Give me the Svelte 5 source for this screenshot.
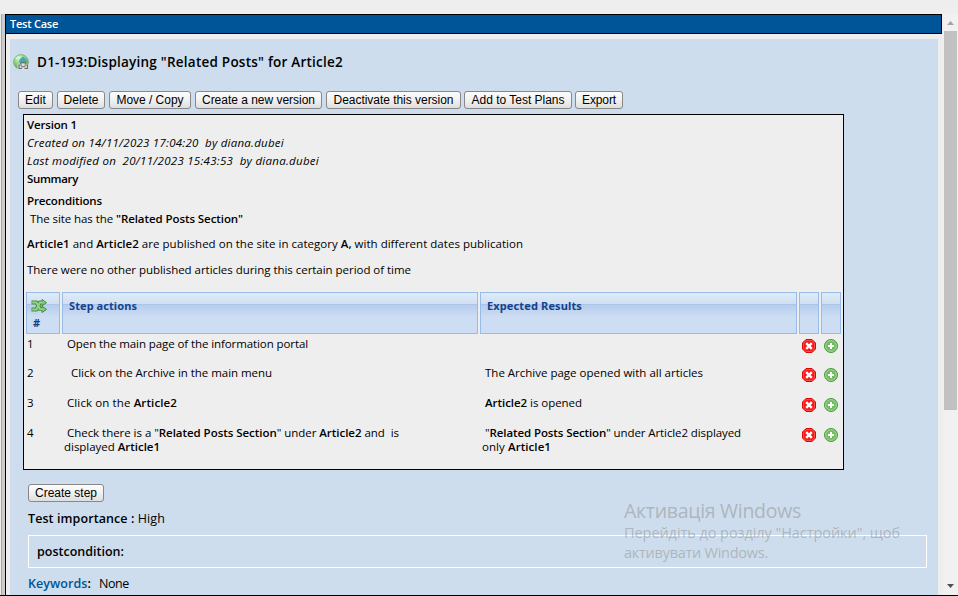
<script>
  // Spreads a line's letter spacing so that it takes the given width.
  function fit(node, width) {
    const range = document.createRange();
    range.selectNodeContents(node);
    const natural = range.getBoundingClientRect().width;
    node.style.letterSpacing = (width - natural) / node.textContent.length + 'px';
  }

  const buttons = [
    ['Edit', 35, 21],
    ['Delete', 48, 35],
    ['Move / Copy', 82, 67],
    ['Create a new version', 127, 113],
    ['Deactivate this version', 135, 120],
    ['Add to Test Plans', 108, 93],
    ['Export', 48, 34]
  ];

  // Every line is [indent, width, segments]; a segment starting with * is bold.
  const steps = [
    { h: 29, action: [[3, 241, ['Open the main page of the information portal']]], result: [] },
    {
      h: 30,
      action: [[7, 201, ['Click on the Archive in the main menu']]],
      result: [[3, 218, ['The Archive page opened with all articles']]]
    },
    {
      h: 30,
      action: [[3, 110, ['Click on the ', '*Article2']]],
      result: [[3, 97, ['*Article2', ' is opened']]]
    },
    {
      h: 42,
      action: [
        [3, 332, ['Check there is a "', '*Related Posts Section', '" under ', '*Article2', ' and \u00a0is']],
        [0, 96, ['displayed ', '*Article1']]
      ],
      result: [
        [3, 256, ['"', '*Related Posts Section', '" under Article2 displayed']],
        [0, 69, ['only ', '*Article1']]
      ]
    }
  ];
</script>

{#snippet lines(list)}
  {#each list as [indent, width, parts]}
    <div class="line" class:indent3={indent === 3} class:indent7={indent === 7}>
      <span use:fit={width}>{#each parts as p}{#if p[0] === '*'}<b>{p.slice(1)}</b>{:else}{p}{/if}{/each}</span>
    </div>
  {/each}
{/snippet}

<div class="screen">
  <div class="divider"></div>
  <main>
    <h1><span use:fit={48}>Test Case</span></h1>
    <div class="panel">
      <div class="title">
        <svg width="16" height="16" viewBox="0 0 16 16">
          <defs>
            <radialGradient id="globe" cx=".4" cy=".25" r=".8">
              <stop offset="0" stop-color="#d6f7ce" /><stop offset=".55" stop-color="#83cf78" /><stop offset="1" stop-color="#3c9150" />
            </radialGradient>
          </defs>
          <circle cx="8" cy="8" r="7.4" fill="url(#globe)" stroke="#69b567" stroke-width=".8" />
          <path d="M7 5l3-2.500 2.500 2 1.500 3-2 2-3-1-2 1-1-2z" fill="#4ba5b5" />
          <path d="M2 5l3-3 2 .5-3 3z" fill="#d9f8d1" />
          <rect x="4.500" y="9.500" width="11" height="6.500" rx="1.500" fill="#dce0dc" />
          <path d="M9 11H6v3.500h3M11.500 11H14.500v3.500h-3M8 12.800h4.500M7.500 10c0-2 5.500-2 5.500 0" fill="none" stroke="#626b66" stroke-width="1.1" />
        </svg>
        <h2><span use:fit={306}>D1-193:Displaying "Related Posts" for Article2</span></h2>
      </div>

      <div class="buttons">
        {#each buttons as [label, width, text]}
          <button style="width: {width}px"><span use:fit={text}>{label}</span></button>
        {/each}
      </div>

      <section class="case">
        <div class="row18"><b><span use:fit={50}>Version 1</span></b></div>
        <div class="row18"><i><span use:fit={257}>Created on 14/11/2023 17:04:20 &nbsp;by diana.dubei</span></i></div>
        <div class="row18"><i><span use:fit={292}>Last modified on &nbsp;20/11/2023 15:43:53 &nbsp;by diana.dubei</span></i></div>
        <div class="row18"><b><span use:fit={51}>Summary</span></b></div>
        <div class="row18 pre"><b><span use:fit={75}>Preconditions</span></b></div>
        <div class="row18 site"><span use:fit={213}>The site has the <b>"Related Posts Section"</b></span></div>
        <div class="para"><span use:fit={496}><b>Article1</b> and <b>Article2</b> are published on the site in category <b>A,</b> with different dates publication</span></div>
        <div class="para"><span use:fit={384}>There were no other published articles during this certain period of time</span></div>

        <div class="grid head">
          <div class="num">
            <svg width="16" height="14" viewBox="0 0 16 14">
              <g fill="none" stroke-linejoin="round">
                <path d="M0.500 3.500H5.500L9 10h2M0.500 10.500H5.500l3.500-7h2" stroke="#458c43" stroke-width="4" />
                <path d="M11 .5l4.500 3.200-4.500 3.200zM11 7.200l4.500 3.200-4.500 3.100z" fill="#82c774" stroke="#458c43" />
                <path d="M1.200 3.500H5.500L9 10.300h3M1.200 10.500H5.500l3.500-7h3" stroke="#93d384" stroke-width="2" />
              </g>
            </svg>
            <span>#</span>
          </div>
          <div><span use:fit={68}>Step actions</span></div>
          <div><span use:fit={95}>Expected Results</span></div>
          <div></div>
          <div></div>
        </div>
        {#each steps as s, i}
          <div class="grid step" style="height: {s.h}px">
            <div class="no">{i + 1}</div>
            <div>{@render lines(s.action)}</div>
            <div>{@render lines(s.result)}</div>
            <svg width="14" height="14" viewBox="0 0 14 14">
              <path d="M4 .5h6L13.500 4v6L10 13.500H4L.5 10V4z" fill="#f21b1b" stroke="#df0505" />
              <path d="M4.300 1.500h5.400l2.800 2.800v5.400l-2.800 2.800H4.300L1.500 9.700V4.300z" fill="none" stroke="#ff6257" stroke-width=".7" />
              <path d="M4.200 4.200l5.600 5.600M9.800 4.200L4.200 9.800" stroke="#fff" stroke-width="2.400" />
            </svg>
            <svg width="14" height="14" viewBox="0 0 14 14">
              <circle cx="7" cy="7" r="6.500" fill="#64b054" stroke="#4a983f" />
              <circle cx="7" cy="7" r="5.400" fill="#72bd60" stroke="#b5e2a6" stroke-width=".8" />
              <path d="M7 4v6M4 7h6" stroke="#fff" stroke-width="2" />
            </svg>
          </div>
        {/each}
      </section>

      <button class="create"><span use:fit={62}>Create step</span></button>
      <div class="importance"><span use:fit={137}><b>Test importance :</b> High</span></div>
      <div class="post"><b><span use:fit={87}>postcondition:</span></b></div>
      <div class="keywords"><b><span use:fit={63}><em>Keywords</em>:</span></b><span use:fit={30}>None</span></div>
    </div>
  </main>
  <aside>
    <svg class="up" width="15" height="17" viewBox="0 0 15 17"><path d="M4 11h7L7.500 7z" fill="#a3a3a3" /></svg>
    <div class="thumb"></div>
    <svg class="down" width="15" height="17" viewBox="0 0 15 17"><path d="M4 6h7L7.500 10z" fill="#505050" /></svg>
  </aside>
  <div class="watermark">
    <div class="big"><span use:fit={177}>Активація Windows</span></div>
    <div><span use:fit={276}>Перейдіть до розділу "Настройки", щоб</span></div>
    <div><span use:fit={144}>активувати Windows.</span></div>
  </div>
</div>

<style>
  .screen {
    position: relative;
    box-sizing: border-box;
    width: 958px;
    height: 596px;
    padding: 14px 0 0 1px;
    border-bottom: 1px solid #000;
    background: #eee;
    display: flex;
    overflow: hidden;
    font: 11.5px 'Open Sans', 'Noto Sans', sans-serif;
    color: #000;
    white-space: nowrap;
  }
  b, h2 { font-weight: 600; }
  .divider {
    box-sizing: border-box;
    width: 4px;
    border-left: 1px solid #a5a5a5;
    background: #ccc;
  }
  main {
    width: 937px;
    box-sizing: border-box;
    border-left: 1px solid #000;
    display: flex;
    flex-direction: column;
  }
  h1 {
    box-sizing: border-box;
    margin: 0;
    height: 20px;
    padding-left: 4px;
    border: 1px solid #000;
    border-left: 0;
    background: #005498;
    color: #fff;
    font-size: 11px;
    font-weight: 600;
    line-height: 18px;
  }
  .panel {
    box-sizing: border-box;
    width: 928px;
    height: 556px;
    margin: 5px 0 0 4px;
    background: #cddded;
    display: flex;
    flex-direction: column;
    align-items: flex-start;
    flex: none;
  }
  .panel > * { flex: none; }
  .title {
    height: 52px;
    padding: 15px 0 0 3px;
    box-sizing: border-box;
    display: flex;
  }
  h2 {
    margin: -2px 0 0 8px;
    font-size: 13.5px;
    line-height: 20px;
  }
  .buttons { display: flex; gap: 4px; padding-left: 8px; }
  .buttons button:nth-child(n + 6) { margin-left: -1px; }
  button {
    box-sizing: border-box;
    height: 18px;
    padding: 0;
    border: 1px solid #888;
    border-radius: 3px;
    background: linear-gradient(#fcfcfc, #f1f1f1 50%, #dedede);
    font: 12px/16px 'Liberation Sans', Arial, sans-serif;
    color: #000;
  }
  .case {
    box-sizing: border-box;
    width: 821px;
    height: 356px;
    margin: 5px 0 0 13px;
    border: 1px solid #000;
    background: #eee;
    padding: 1px 2px;
  }
  .row18 { height: 18px; line-height: 18px; padding-left: 1px; }
  .pre { margin-top: 4px; }
  .site { padding-left: 4px; height: 21px; }
  .para { height: 26px; line-height: 26px; padding-left: 1px; }
  .grid {
    display: grid;
    grid-template-columns: 34px 416px 317px 20px 20px;
    column-gap: 2px;
  }
  .head { margin-top: 9px; height: 42px; }
  .head > div {
    box-sizing: border-box;
    border: 1px solid #99bbe8;
    background: linear-gradient(#dfebf7 0, #cfe0f3 11px, #9fc0e7 11px, #b7cdec 12px, #cdddf3 24px);
    color: #15428b;
    font: bold 11px/16px 'Noto Sans', 'Open Sans', sans-serif;
    padding: 5px 0 0 6px;
  }
  .head .num { padding: 6px 0 0 4px; display: flex; flex-direction: column; }
  .head .num svg { flex: none; }
  .head .num span { line-height: 19px; padding-left: 2px; }
  .step { padding-top: 3px; box-sizing: border-box; }
  .step > div { padding-left: 2px; line-height: 14px; }
  .step > .no { padding-left: 1px; }
  .step > svg { margin: 2px 0 0 3px; }
  .indent3 { padding-left: 3px; }
  .indent7 { padding-left: 7px; }
  .create { width: 76px; margin: 14px 0 0 18px; }
  .importance {
    height: 33px;
    line-height: 33px;
    padding-left: 18px;
    font-size: 12.5px;
  }
  .post {
    box-sizing: border-box;
    width: 899px;
    height: 33px;
    margin-left: 18px;
    padding-left: 8px;
    border: 1px solid #fff;
    line-height: 31px;
    font-size: 12.5px;
  }
  .keywords {
    display: flex;
    gap: 8px;
    padding-left: 18px;
    line-height: 32px;
    font-size: 12.5px;
  }
  .keywords em { font-style: normal; color: #005498; }
  aside {
    width: 15px;
    margin-left: 1px;
    background: #f1f1f1;
    display: flex;
    flex-direction: column;
  }
  aside svg { flex: none; }
  .thumb { width: 13px; height: 379px; margin-left: 1px; background: #c1c1c1; flex: none; }
  .down { margin-top: auto; }
  .watermark {
    position: absolute;
    left: 624px;
    top: 499px;
    color: rgba(150, 150, 150, .58);
    font-size: 14.5px;
    line-height: 20px;
  }
  .watermark .big { font-size: 19.5px; line-height: 24px; }
</style>
